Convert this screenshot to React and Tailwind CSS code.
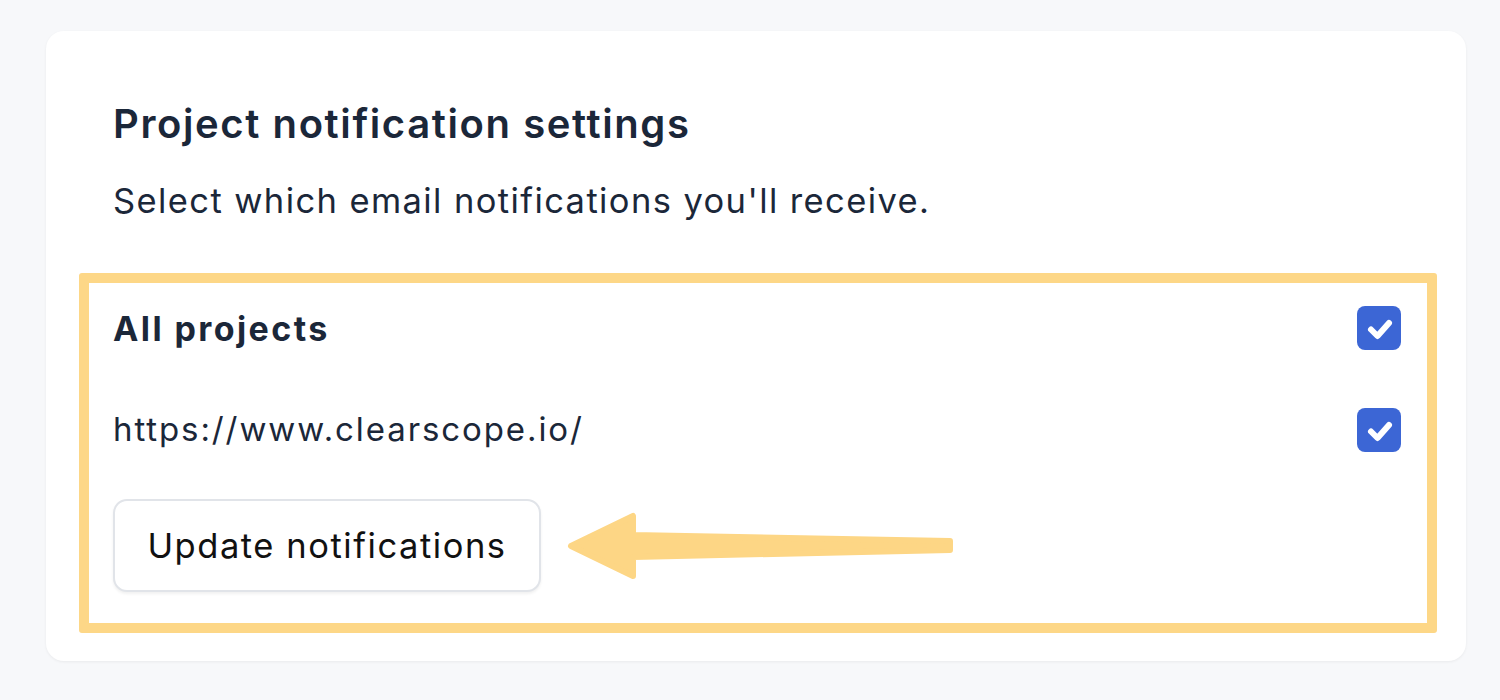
export default function App() {
  return (
    <div className="w-[1500px] h-[700px] bg-[#f7f8fa] pt-[31px] pl-[46px]" style={{ fontFamily: "Inter, 'Noto Sans', sans-serif" }}>
      <div className="w-[1420px] h-[630px] bg-white rounded-[18px] shadow-[0_1px_3px_rgba(0,0,0,0.06)] pt-[69px] pl-[67px] pr-[65px]">
        <h1 className="text-[40px] leading-[48px] font-semibold text-[#1b2739] tracking-[1.6px]">Project notification settings</h1>
        <p className="mt-[31px] text-[34.5px] leading-[44px] text-[#1b2739] tracking-[1.4px]">Select which email notifications you'll receive.</p>
        <div className="mt-[50px] -ml-[34px] -mr-[36px] border-[10px] border-[#fdd787] rounded-[3px] pl-[24px] pr-[26px] pt-[23px] pb-[31px]">
          <div className="flex items-center justify-between h-[44px]">
            <span className="text-[34px] font-bold text-[#1b2739] tracking-[2.4px]">All projects</span>
            <Check />
          </div>
          <div className="flex items-center justify-between h-[44px] mt-[58px]">
            <span className="text-[33px] text-[#1b2739] tracking-[1.9px]">https://www.clearscope.io/</span>
            <Check />
          </div>
          <div className="relative mt-[47px] h-[93px]">
            <button className="h-[93px] w-[428px] rounded-[14px] border-2 border-[#e1e4e9] bg-white shadow-[0_2px_3px_rgba(0,0,0,0.06)] text-[34.5px] text-[#111111] tracking-[1.55px]">
              Update notifications
            </button>
            <svg className="absolute left-[452px] top-[9px]" width="400" height="80" viewBox="0 0 400 80">
              <path
                d="M6 38 L68 8 L68 27 L385 33 L385 42 L68 49 L68 68 Z"
                fill="#fdd685"
                stroke="#fdd685"
                strokeWidth="6"
                strokeLinejoin="round"
              />
            </svg>
          </div>
        </div>
      </div>
    </div>
  );
}

function Check() {
  return (
    <div className="w-[44px] h-[44px] rounded-[8px] bg-[#3c66d5]">
      <svg width="44" height="44" viewBox="0 0 44 44" fill="none">
        <path d="M14 23.5 L20.5 30 L32 17" stroke="white" strokeWidth="6" strokeLinecap="round" strokeLinejoin="round" />
      </svg>
    </div>
  );
}
